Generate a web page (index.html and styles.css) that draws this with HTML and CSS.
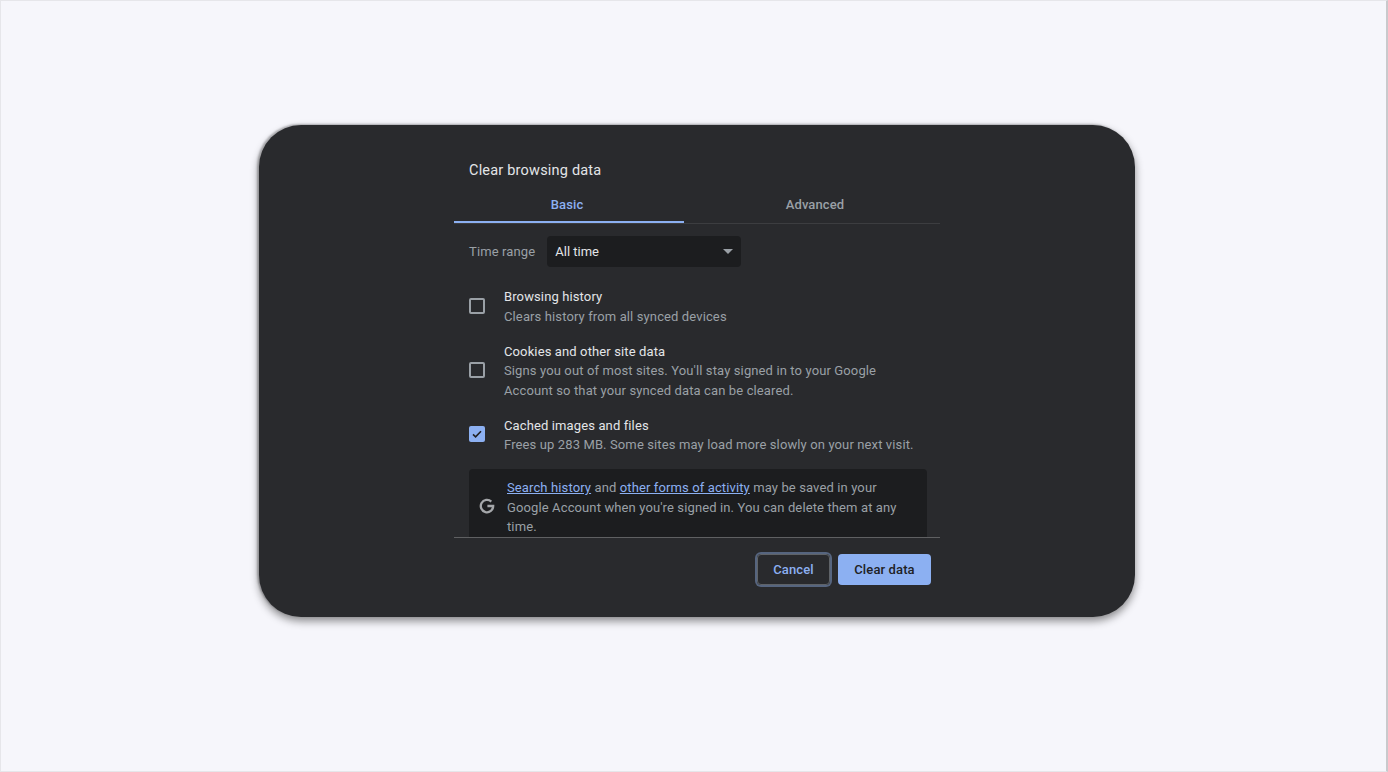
FILE: index.html
```html
<!DOCTYPE html>
<html lang="en">
<head>
    <meta charset="UTF-8">
    <meta name="viewport" content="width=device-width, initial-scale=1.0">
    <title>Clear browsing data</title>
    <link rel="stylesheet" href="styles.css">
</head>
<body>
    <div class="card">
        <div class="dialog">
            <div class="title">Clear browsing data</div>

            <div class="tabs">
                <div class="tab tab-active">Basic</div>
                <div class="tab tab-other">Advanced</div>
            </div>

            <div class="content">
                <div class="range">
                    <span class="range-label">Time range</span>
                    <div class="select">
                        <span>All time</span>
                        <span class="select-arrow"></span>
                    </div>
                </div>

                <div class="option option-first">
                    <span class="box"></span>
                    <div class="option-text">
                        <div class="option-name">Browsing history</div>
                        <div class="option-desc">Clears history from all synced devices</div>
                    </div>
                </div>

                <div class="option">
                    <span class="box"></span>
                    <div class="option-text">
                        <div class="option-name">Cookies and other site data</div>
                        <div class="option-desc">Signs you out of most sites. You'll stay signed in to your Google<br>Account so that your synced data can be cleared.</div>
                    </div>
                </div>

                <div class="option">
                    <span class="box box-checked">
                        <svg width="16" height="16" viewBox="0 0 16 16"><path d="M4 8.300l2.600 2.500 5.400-5.600" fill="none" stroke="#202124" stroke-width="1.600"/></svg>
                    </span>
                    <div class="option-text">
                        <div class="option-name">Cached images and files</div>
                        <div class="option-desc">Frees up 283 MB. Some sites may load more slowly on your next visit.</div>
                    </div>
                </div>

                <div class="notice">
                    <svg class="notice-icon" width="18" height="18" viewBox="0 0 18 18"><path d="M13.300 4.600A6.200 6.200 0 1 0 15.200 9H9.400" fill="none" stroke="#a5a7aa" stroke-width="2.300"/></svg>
                    <div class="notice-text"><a href="#">Search history</a> and <a href="#">other forms of activity</a> may be saved in your<br>Google Account when you're signed in. You can delete them at any<br>time.</div>
                </div>
            </div>

            <div class="footer">
                <button class="btn btn-cancel">Cancel</button>
                <button class="btn btn-clear">Clear data</button>
            </div>
        </div>
    </div>
</body>
</html>
```

FILE: styles.css
```css
html {
    height: 100%;
}

body {
    box-sizing: border-box;
    height: 100%;
    margin: 0;
    padding: 124px 0 0 258px;
    overflow: hidden;
    font-family: Roboto, "Liberation Sans", sans-serif;
    font-size: 13px;
    letter-spacing: 0.12px;
    background: #f6f6fb;
    border: 1px solid #e6e6ea;
    border-right: 2px solid #c9c9cc;
}

.card {
    display: flex;
    justify-content: center;
    width: 876px;
    height: 492px;
    border-radius: 42px;
    background: #292a2d;
    box-shadow: -2px -1px 2px rgba(0, 0, 0, 0.25), 0 4px 9px rgba(0, 0, 0, 0.45);
}

.dialog {
    width: 486px;
}

.title {
    padding: 36px 0 0 15px;
    height: 25px;
    line-height: 19px;
    font-size: 14.500px;
    letter-spacing: 0.2px;
    color: #e3e5e8;
}

/* Tabs */
.tabs {
    display: flex;
    justify-content: space-between;
    height: 37px;
    border-bottom: 1px solid #3c3d40;
}

.tab {
    height: 36px;
    padding-top: 10px;
    box-sizing: border-box;
    line-height: 18px;
    text-align: center;
    font-weight: 500;
}

.tab-active {
    width: 230px;
    height: 37px;
    padding-right: 4px;
    color: #8cb0f2;
    border-bottom: 2px solid #8cb0f2;
}

.tab-other {
    width: 250px;
    color: #9aa0a6;
}

/* Scrolling part, the notice is cut off at its bottom */
.content {
    height: 313px;
    overflow: hidden;
    padding: 12px 13px 0 15px;
    box-sizing: border-box;
}

.range {
    display: flex;
    align-items: center;
    gap: 12px;
}

.range-label {
    color: #9aa0a6;
}

.select {
    display: flex;
    align-items: center;
    justify-content: space-between;
    box-sizing: border-box;
    width: 194px;
    height: 31px;
    padding: 0 8px;
    border-radius: 4px;
    background: #1c1d1f;
    color: #e3e5e8;
    letter-spacing: 0;
}

.select-arrow {
    width: 0;
    height: 0;
    border-left: 5px solid transparent;
    border-right: 5px solid transparent;
    border-top: 5px solid #9aa0a6;
}

/* Checkbox rows */
.option {
    display: flex;
    align-items: center;
    margin-top: 15.500px;
    line-height: 19.500px;
}

.option-first {
    margin-top: 20px;
}

.box {
    flex: none;
    box-sizing: border-box;
    width: 16px;
    height: 16px;
    margin: -2px 19px 0 0;
    border: 2px solid #9aa0a6;
    border-radius: 2px;
}

.box-checked {
    border: 0;
    background: #8cb0f2;
}

.box-checked svg {
    display: block;
}

.option-name {
    color: #e3e5e8;
}

.option-desc {
    color: #9aa0a6;
}

/* Google activity notice */
.notice {
    display: flex;
    align-items: flex-start;
    box-sizing: border-box;
    height: 78px;
    margin-top: 14px;
    padding: 9.500px 8px 0 9px;
    border-radius: 4px;
    background: #1c1d1f;
}

.notice-icon {
    flex: none;
    margin: 18.500px 11px 0 0;
}

.notice-text {
    line-height: 19.500px;
    color: #9aa0a6;
}

.notice-text a {
    color: #8cb0f2;
}

/* Footer */
.footer {
    display: flex;
    justify-content: flex-end;
    align-items: center;
    gap: 8px;
    height: 64px;
    padding: 0 9px 0 0;
    box-sizing: border-box;
    border-top: 1px solid #5f6062;
}

.btn {
    box-sizing: border-box;
    height: 31px;
    border-radius: 4px;
    font-family: inherit;
    font-size: 13px;
    font-weight: 500;
    letter-spacing: inherit;
}

.btn-cancel {
    width: 73px;
    color: #8cb0f2;
    background: transparent;
    border: 1px solid #5f6368;
    box-shadow: 0 0 0 2px #56657f;
}

.btn-clear {
    width: 93px;
    color: #202124;
    background: #8cb0f2;
    border: 0;
}
```
